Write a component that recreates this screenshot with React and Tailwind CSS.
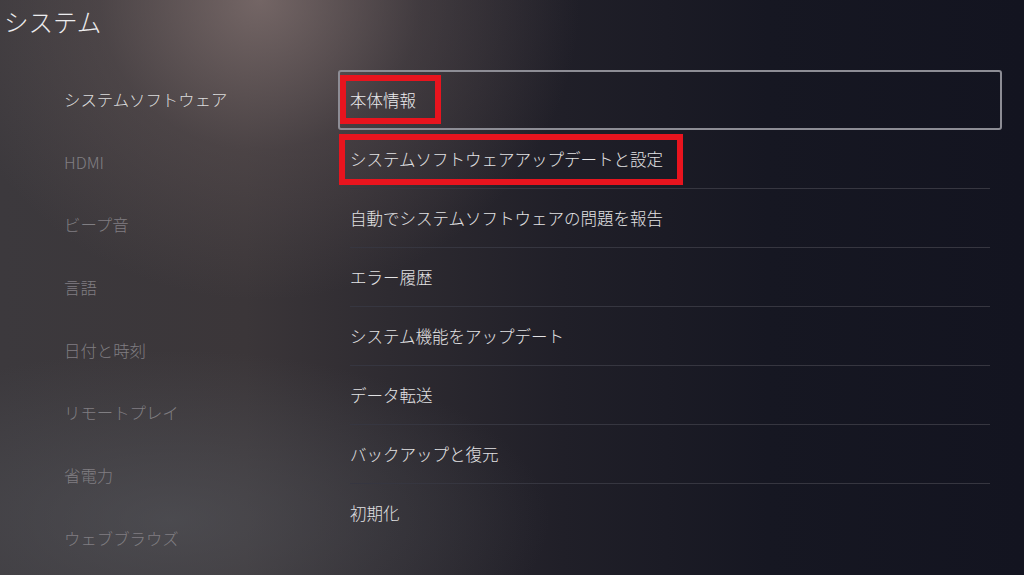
import React from 'react';

const sideItems = [
  { label: 'システムソフトウェア', active: true },
  { label: 'HDMI' },
  { label: 'ビープ音' },
  { label: '言語' },
  { label: '日付と時刻' },
  { label: 'リモートプレイ' },
  { label: '省電力' },
  { label: 'ウェブブラウズ' },
];

const menuItems = [
  'システムソフトウェアアップデートと設定',
  '自動でシステムソフトウェアの問題を報告',
  'エラー履歴',
  'システム機能をアップデート',
  'データ転送',
  'バックアップと復元',
  '初期化',
];

export default function App() {
  return (
    <div
      className="relative w-[1024px] h-[575px] overflow-hidden text-[#e6e6e8] font-light"
      style={{ fontFamily: '"Noto Sans CJK JP", "Noto Sans", sans-serif' }}
    >
      {/* background layers */}
      <div className="absolute inset-0 bg-[linear-gradient(90deg,#3c393d_0%,#3b3639_24%,#2e2b31_38%,#201f28_55%,#161722_75%,#131420_100%)]" />
      <div className="absolute inset-0 bg-[radial-gradient(ellipse_320px_300px_at_260px_0px,rgba(140,122,120,0.7),rgba(110,96,96,0.32)_50%,rgba(0,0,0,0)_100%)]" />
      <div className="absolute inset-0 bg-[radial-gradient(ellipse_380px_170px_at_170px_520px,rgba(88,90,96,0.55),rgba(0,0,0,0)_100%)]" />

      <div className="relative flex flex-col h-full">
        <div className="h-[68px] pl-[4px] pt-[6px] text-[24.5px] leading-[32px] text-[#ececee]">システム</div>

        <div className="flex">
          <div className="w-[338px] pl-[64px] flex flex-col">
            {sideItems.map((item) => (
              <div
                key={item.label}
                className={`h-[62.7px] flex items-center text-[16.4px] ${item.active ? 'text-[#dcdcdc]' : 'text-[#807e82]'}`}
              >
                {item.label}
              </div>
            ))}
          </div>

          <div className="w-[664px] pt-[2px] flex flex-col">
            <div className="h-[60px] border-2 border-[#8d8d95] rounded-[3px] flex items-center pl-[10px] text-[16.5px] text-[#ececee]">
              本体情報
            </div>
            {menuItems.map((label, i) => (
              <div key={label} className="mx-[12px] h-[59px] flex flex-col">
                <div className="flex-1 flex items-center text-[16.5px] text-[#e2e2e4]">{label}</div>
                {i < menuItems.length - 1 && <div className="h-px bg-[#363640]" />}
              </div>
            ))}
          </div>
        </div>
      </div>

      {/* red highlight annotations */}
      <div className="absolute left-[340px] top-[75px] w-[101px] h-[49px] border-[6px] border-[#e8141e]" />
      <div className="absolute left-[339px] top-[134px] w-[344px] h-[51px] border-[6px] border-[#e8141e]" />
    </div>
  );
}
